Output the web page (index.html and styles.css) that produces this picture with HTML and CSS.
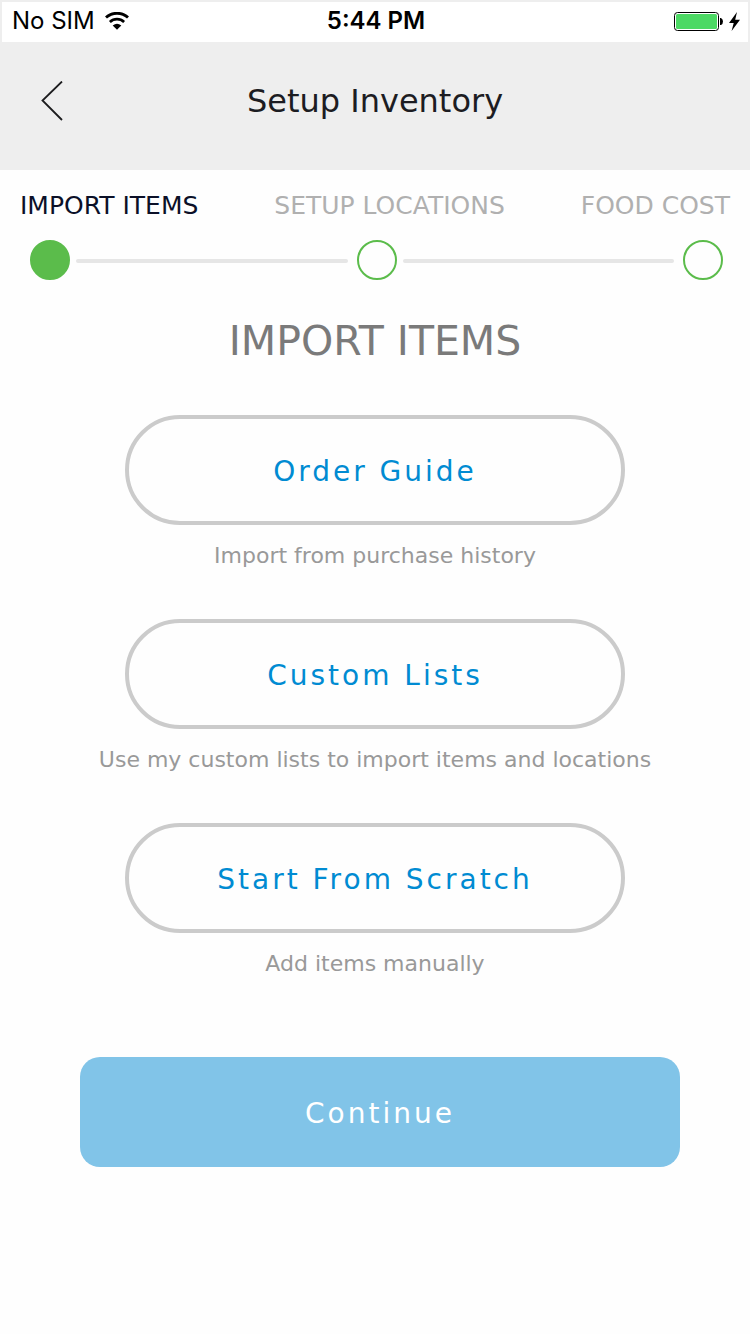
FILE: index.html
```html
<!DOCTYPE html>
<html lang="en">
<head>
<meta charset="utf-8">
<meta name="viewport" content="width=device-width, initial-scale=1">
<title>Setup Inventory</title>
<link rel="stylesheet" href="styles.css">
</head>
<body>
<div class="status-bar">
  <div class="status-left">
    <span>No SIM</span>
    <svg class="wifi" viewBox="0 0 24 18" width="24" height="18" aria-hidden="true">
      <path d="M1 5.600C7 -0.200 17 -0.200 23 5.600" fill="none" stroke="#000" stroke-width="2.800"/>
      <path d="M4.900 10C9 6.200 15 6.200 19.100 10" fill="none" stroke="#000" stroke-width="2.700"/>
      <path d="M12 17.800L7.700 13.500Q12 9.800 16.300 13.500Z"/>
    </svg>
  </div>
  <time class="status-time">5:44 PM</time>
  <div class="status-right">
    <svg viewBox="0 0 49 19" width="49" height="19" aria-hidden="true">
      <rect x="0.500" y="0.500" width="44" height="18" rx="3" fill="#fff" stroke="#000"/>
      <rect x="2" y="2" width="41" height="15" rx="1.500" fill="#4cd964"/>
      <path d="M46 6h1q2 1 2 3.500t-2 3.500h-1z"/>
    </svg>
    <svg viewBox="0 0 11 19" width="11" height="19" aria-hidden="true">
      <path d="M8 0L0 11H4.700L2.600 19L11 7.800H6.200Z"/>
    </svg>
  </div>
</div>
<header class="header">
  <button class="back" type="button" aria-label="Back">
    <svg viewBox="0 0 22 40" width="22" height="40" aria-hidden="true">
      <path d="M21 0.500L1.500 19.500L21 39" fill="none" stroke="#1c1c1e" stroke-width="1.800"/>
    </svg>
  </button>
  <h1 class="title">Setup Inventory</h1>
</header>
<main class="main">
  <div class="step-labels">
    <span class="step-label step-label-current">IMPORT ITEMS</span>
    <span class="step-label">SETUP LOCATIONS</span>
    <span class="step-label">FOOD COST</span>
  </div>
  <div class="track">
    <span class="dot dot-current"></span>
    <span class="line"></span>
    <span class="dot"></span>
    <span class="line"></span>
    <span class="dot"></span>
  </div>
  <h2 class="heading">IMPORT ITEMS</h2>
  <div class="options">
    <div class="option">
      <button class="pill" type="button" aria-describedby="hint-guide">Order Guide</button>
      <p class="hint" id="hint-guide">Import from purchase history</p>
    </div>
    <div class="option">
      <button class="pill" type="button" aria-describedby="hint-lists">Custom Lists</button>
      <p class="hint" id="hint-lists">Use my custom lists to import items and locations</p>
    </div>
    <div class="option">
      <button class="pill" type="button" aria-describedby="hint-scratch">Start From Scratch</button>
      <p class="hint" id="hint-scratch">Add items manually</p>
    </div>
  </div>
  <div class="actions">
    <button class="continue" type="button">Continue</button>
  </div>
</main>
</body>
</html>
```
FILE: styles.css
```css
* {
  box-sizing: border-box;
}

body {
  margin: 0;
  min-height: 100vh;
  background: #fefefe;
  font-family: Verdana, "DejaVu Sans", sans-serif;
}

button {
  font-family: inherit;
  cursor: pointer;
}

h1,
h2,
p {
  margin: 0;
  font-weight: 400;
}

.status-bar {
  display: grid;
  grid-template-columns: 1fr auto 1fr;
  align-items: center;
  height: 42px;
  padding: 0 8px 2px 10px;
  border: solid #eee;
  border-width: 2px 2px 0;
  background: #fff;
  color: #000;
  font-family: Inter, "Liberation Sans", sans-serif;
  font-size: 24px;
  line-height: 28px;
}

.status-left,
.status-right {
  display: flex;
  align-items: center;
}

.status-left {
  gap: 10px;
}

.status-right {
  justify-content: flex-end;
  gap: 6px;
}

.status-time {
  font-weight: 600;
}

.header {
  display: grid;
  grid-template-columns: 104px 1fr 104px;
  align-items: center;
  height: 128px;
  padding-bottom: 10px;
  background: #eee;
}

.back {
  display: flex;
  align-items: center;
  justify-content: center;
  height: 80px;
  padding: 0;
  border: 0;
  background: none;
}

.title {
  color: #1c1c22;
  font-size: 32px;
  line-height: 40px;
  text-align: center;
}

.step-labels {
  display: flex;
  justify-content: space-between;
  padding: 21px 20px 0;
}

.step-label {
  color: #b0b0b0;
  font-size: 25px;
  line-height: 30px;
}

.step-label-current {
  color: #0b1028;
}

.track {
  display: flex;
  align-items: center;
  padding: 19px 27px 0 30px;
}

.dot {
  flex: none;
  width: 40px;
  height: 40px;
  border: 2px solid #5bbc4b;
  border-radius: 50%;
  background: #fefefe;
}

.dot-current {
  background: #5bbc4b;
}

.line {
  flex: 1;
  height: 4px;
  margin: 2px 9px 0 6px;
  border-radius: 2px;
  background: #e6e6e6;
}

.heading {
  padding: 36px 20px 0;
  color: #7a7a7a;
  font-size: 41px;
  line-height: 50px;
  text-align: center;
}

.options {
  display: flex;
  flex-direction: column;
  gap: 48px;
  padding: 49px 20px 0;
}

.option {
  display: flex;
  flex-direction: column;
  align-items: center;
  gap: 16px;
}

.pill,
.continue {
  width: 100%;
  height: 110px;
  padding: 2px 0 0;
  font-size: 28px;
  letter-spacing: 3px;
}

.pill {
  max-width: 500px;
  border: 4px solid #cbcbcb;
  border-radius: 55px;
  background: #fefefe;
  color: #008bd2;
}

.hint {
  color: #999;
  font-size: 22px;
  line-height: 30px;
  text-align: center;
}

.actions {
  padding: 78px 70px 40px 80px;
}

.continue {
  border: 0;
  border-radius: 20px;
  background: #81c4e8;
  color: #fff;
}
```
